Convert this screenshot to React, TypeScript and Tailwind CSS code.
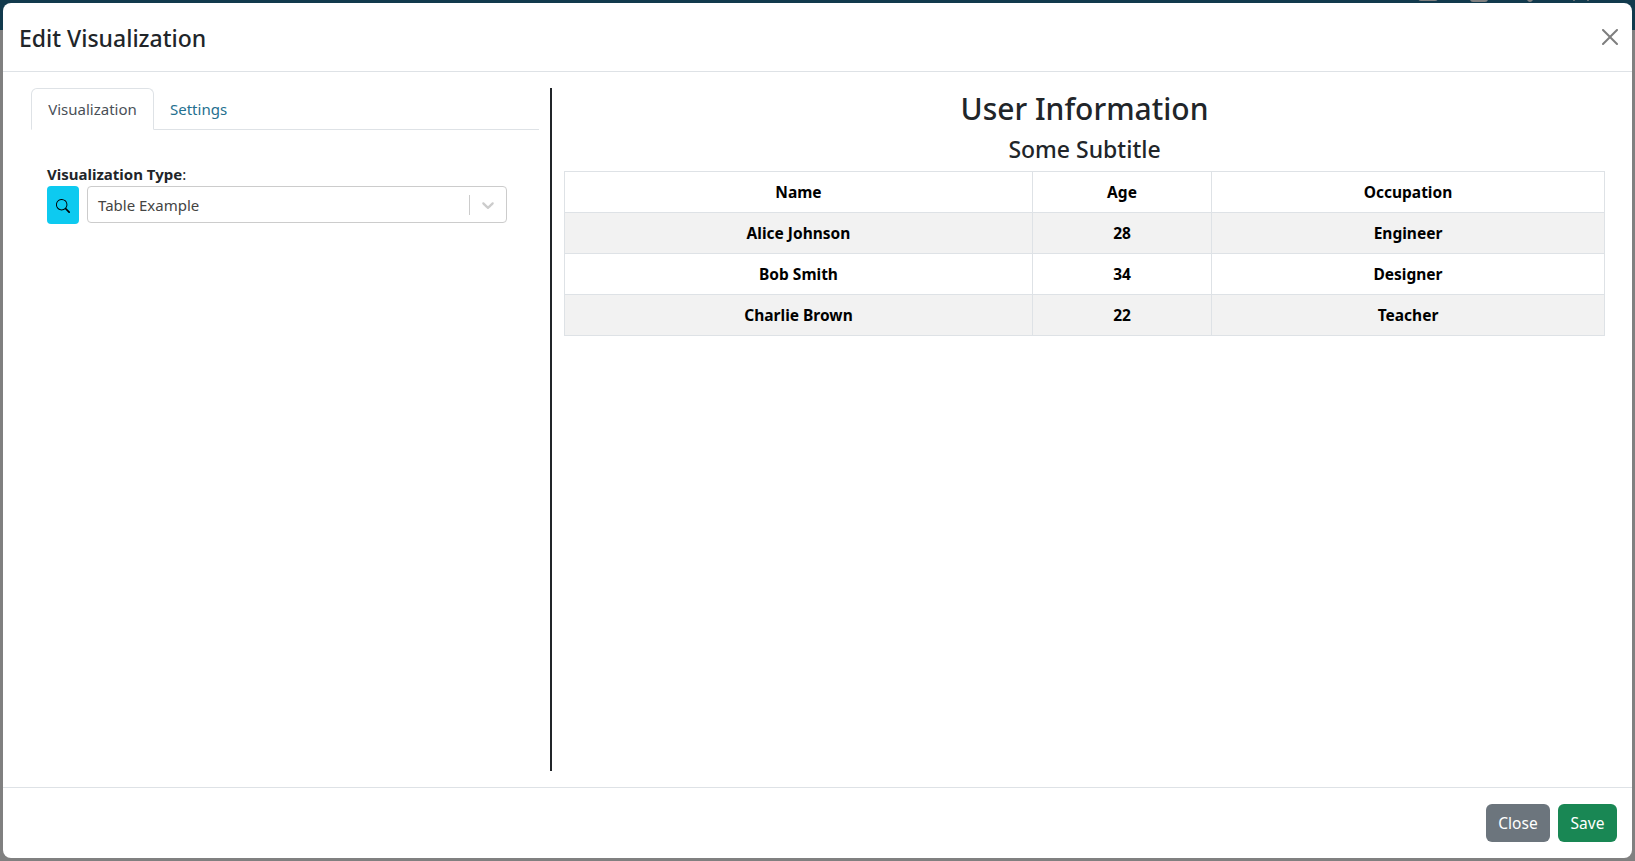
import { useState } from "react";
import { Home, FileText, Bell, User } from "lucide-react";

const rows = [
  { name: "Name", age: "Age", job: "Occupation" },
  { name: "Alice Johnson", age: "28", job: "Engineer" },
  { name: "Bob Smith", age: "34", job: "Designer" },
  { name: "Charlie Brown", age: "22", job: "Teacher" },
];

export default function App() {
  const [tab, setTab] = useState("viz");

  return (
    <div className="relative w-[1635px] h-[861px] overflow-hidden bg-[#808080] font-['Noto_Sans',sans-serif]">
      {/* Dimmed navbar behind the modal */}
      <div className="relative h-[30px] bg-[#123a4d] flex justify-center">
        <span className="text-[#808080] text-[46px] leading-none -mt-[43px]">Demo</span>
        <div className="absolute right-[42px] -top-[21px] flex gap-[27px] text-[#808080]">
          <Home size={24} />
          <FileText size={24} />
          <Bell size={24} />
          <User size={24} />
        </div>
      </div>

      {/* Modal */}
      <div className="absolute top-[3px] left-[3px] w-[1629px] h-[855px] bg-white rounded-lg flex flex-col">
        <div className="h-[69px] shrink-0 border-b border-[#dee2e6] flex items-center justify-between pl-4 pr-[14px]">
          <h5 className="text-[23px] font-medium text-[#212529] pt-[3px]">Edit Visualization</h5>
          <button className="w-4 h-4 opacity-50 text-black">
            <svg viewBox="0 0 16 16" width="16" height="16" fill="currentColor">
              <path d="M.293.293a1 1 0 0 1 1.414 0L8 6.586 14.293.293a1 1 0 1 1 1.414 1.414L9.414 8l6.293 6.293a1 1 0 0 1-1.414 1.414L8 9.414l-6.293 6.293a1 1 0 0 1-1.414-1.414L6.586 8 .293 1.707a1 1 0 0 1 0-1.414z" />
            </svg>
          </button>
        </div>

        <div className="flex-1 flex pt-4 pb-4 pl-7 pr-[27px] min-h-0">
          {/* Left column */}
          <div className="w-[521px] shrink-0 h-full border-r-2 border-[#212529] pr-[11px]">
            <div className="flex h-[42px] border-b border-[#dee2e6]">
              <button
                onClick={() => setTab("viz")}
                className="h-[42px] w-[123px] text-[15px] text-[#495057] bg-white border border-[#dee2e6] border-b-white rounded-t-md"
              >
                Visualization
              </button>
              <button onClick={() => setTab("settings")} className="h-[42px] px-4 text-[15px] text-[#24708f]">
                Settings
              </button>
            </div>
            <div className="pl-4 pt-8">
              <label className="block text-[15px] leading-6 text-[#212529]">
                <b className="font-bold">Visualization Type</b>:
              </label>
              <div className="flex gap-2 w-[460px]">
                <button className="w-8 h-[38px] shrink-0 rounded bg-[#0dcaf0] flex items-center justify-center text-black pt-[2px]">
                  <svg viewBox="0 0 16 16" width="14" height="14" fill="currentColor">
                    <path d="M11.742 10.344a6.5 6.5 0 1 0-1.397 1.398h-.001c.03.04.062.078.098.115l3.85 3.85a1 1 0 0 0 1.415-1.414l-3.85-3.85a1.007 1.007 0 0 0-.115-.1zM12 6.5a5.5 5.5 0 1 1-11 0 5.5 5.5 0 0 1 11 0z" />
                  </svg>
                </button>
                <div className="flex-1 h-[37px] border border-[#ccc] rounded flex items-center pl-[10px] pr-2">
                  <span className="flex-1 text-[15px] text-[#444] pt-[2px]">Table Example</span>
                  <span className="w-px h-5 bg-[#ccc]" />
                  <svg viewBox="0 0 20 20" width="20" height="20" fill="#ccc" className="ml-2">
                    <path d="M4.516 7.548c0.436-0.446 1.043-0.481 1.576 0l3.908 3.747 3.908-3.747c0.533-0.481 1.141-0.446 1.574 0 0.436 0.445 0.408 1.197 0 1.615-0.406 0.418-4.695 4.502-4.695 4.502-0.217 0.223-0.502 0.335-0.787 0.335s-0.57-0.112-0.789-0.335c0 0-4.287-4.084-4.695-4.502s-0.436-1.17 0-1.615z" />
                  </svg>
                </div>
              </div>
            </div>
          </div>

          {/* Right column: preview */}
          <div className="flex-1 pl-3 min-w-0">
            <h2 className="text-center text-[30px] leading-[42px] font-medium text-[#212529]">User Information</h2>
            <h4 className="text-center text-[23px] leading-[38px] font-medium text-[#212529]">Some Subtitle</h4>
            <table className="mt-[3px] w-[1040px] table-fixed border-collapse text-[15.5px] font-bold text-black">
              <colgroup>
                <col className="w-[468px]" />
                <col className="w-[179px]" />
                <col className="w-[393px]" />
              </colgroup>
              <tbody>
                {rows.map((r, i) => (
                  <tr key={r.name} className={i % 2 === 1 ? "h-[41px] bg-[#f2f2f2]" : "h-[41px] bg-white"}>
                    <td className="border border-[#dee2e6] text-center pt-[2px]">{r.name}</td>
                    <td className="border border-[#dee2e6] text-center pt-[2px]">{r.age}</td>
                    <td className="border border-[#dee2e6] text-center pt-[2px]">{r.job}</td>
                  </tr>
                ))}
              </tbody>
            </table>
          </div>
        </div>

        <div className="h-[71px] shrink-0 border-t border-[#dee2e6] flex items-center justify-end gap-2 pr-[15px]">
          <button className="h-[38px] w-16 rounded-md bg-[#6c757d] text-white text-[15.5px] pt-[2px]">Close</button>
          <button className="h-[38px] w-[59px] rounded-md bg-[#198754] text-white text-[15.5px] pt-[2px]">Save</button>
        </div>
      </div>
    </div>
  );
}
